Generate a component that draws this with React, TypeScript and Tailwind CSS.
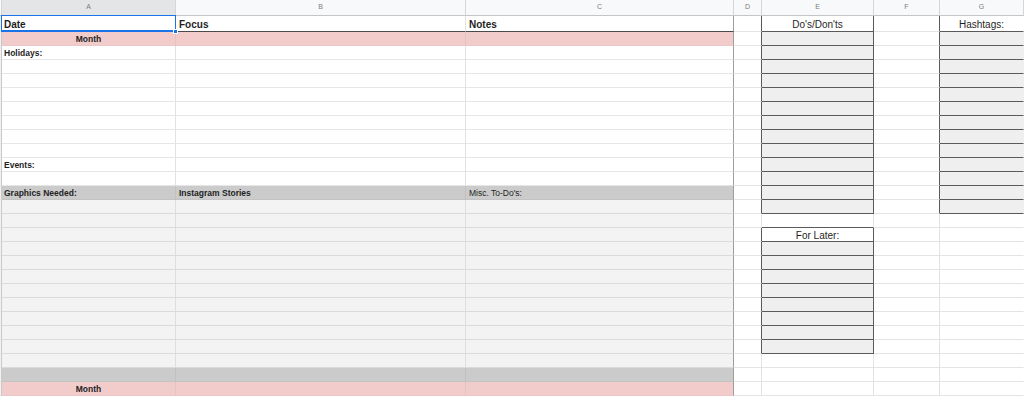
import React from 'react';

// column widths of the sheet (row-header strip, A..G)
const W = {
  rh: 'w-[2px]',
  a: 'w-[174px]',
  b: 'w-[290px]',
  c: 'w-[268px]',
  d: 'w-[28px]',
  e: 'w-[112px]',
  f: 'w-[66px]',
  g: 'flex-1 min-w-0',
};

const DARK_R = 'border-r-[#5a5a5a]';
const DARK_B = 'border-b-[#5a5a5a]';
const LINE_R = 'border-r-[#e2e2e2]';
const LINE_B = 'border-b-[#e4e4e4]';
const EDGE_C = 'border-r-[#9d9d9d]';

type Band = 'pink' | 'white' | 'dark' | 'light';

const BAND: Record<Band, { bg: string; r: string; b: string }> = {
  pink: { bg: 'bg-[#f2cbcb]', r: 'border-r-[#e2c4c4]', b: 'border-b-[#ebc7c7]' },
  white: { bg: 'bg-white', r: 'border-r-[#e2e2e2]', b: 'border-b-[#e6e6e6]' },
  dark: { bg: 'bg-[#cbcbcb]', r: 'border-r-[#c0c0c0]', b: 'border-b-[#c3c3c3]' },
  light: { bg: 'bg-[#f3f3f3]', r: 'border-r-[#dedede]', b: 'border-b-[#dbdbdb]' },
};

const bandOf = (r: number): Band => {
  if (r === 0 || r === 25) return 'pink';
  if (r === 11 || r === 24) return 'dark';
  if (r >= 12 && r <= 23) return 'light';
  return 'white';
};

type CellProps = {
  w: string;
  bg?: string;
  r?: string;
  b?: string;
  pad?: string;
  center?: boolean;
  extra?: string;
  children?: React.ReactNode;
};

const Cell: React.FC<CellProps> = ({
  w,
  bg = 'bg-white',
  r = LINE_R,
  b = LINE_B,
  pad = 'px-[3px]',
  center,
  extra = 'overflow-hidden',
  children,
}) => (
  <div
    className={`${w} ${bg} ${r} ${b} ${pad} ${center ? 'justify-center' : 'justify-start'} ${extra} relative h-full shrink-0 flex items-center pt-[2px] whitespace-nowrap border-r border-b text-[#1f1f1f]`}
  >
    {children}
  </div>
);

const Label: React.FC<{ bold?: boolean; children: React.ReactNode }> = ({ bold = true, children }) => (
  <span className={`text-[8.5px] leading-none ${bold ? 'font-bold' : 'font-normal'}`}>{children}</span>
);

const ColHead: React.FC<{ w: string; active?: boolean; children?: React.ReactNode }> = ({ w, active, children }) => (
  <div
    className={`${w} ${active ? 'bg-[#e4e5e6]' : 'bg-[#f8f9fa]'} h-full shrink-0 flex items-center justify-center border-r border-b border-r-[#d6d6d6] border-b-[#c5c5c5] text-[7px] text-[#7b7b7b]`}
  >
    {children}
  </div>
);

function BodyRow({ r }: { r: number }) {
  const band = BAND[bandOf(r)];

  let aText: React.ReactNode = null;
  let aCenter = false;
  if (r === 0 || r === 25) {
    aText = <Label>Month</Label>;
    aCenter = true;
  } else if (r === 1) aText = <Label>Holidays:</Label>;
  else if (r === 9) aText = <Label>Events:</Label>;
  else if (r === 11) aText = <Label>Graphics Needed:</Label>;

  const bText = r === 11 ? <Label>Instagram Stories</Label> : null;
  const cText = r === 11 ? <Label bold={false}>Misc. To-Do's:</Label> : null;

  // Do's/Don'ts list and For Later list live in column E, hashtags in G
  const boxE = r <= 12 || (r >= 15 && r <= 22);
  const headE = r === 14;
  const boxG = r <= 12;

  let eBg = 'bg-white';
  let eR = LINE_R;
  let eB = LINE_B;
  if (boxE) {
    eBg = 'bg-[#efefef]';
    eR = DARK_R;
    eB = DARK_B;
  } else if (headE) {
    eR = DARK_R;
    eB = DARK_B;
  } else if (r === 13) {
    eB = DARK_B;
  }

  return (
    <div className="flex h-[14px]">
      <Cell w={W.rh} bg="bg-[#f1f1f1]" r="border-r-[#c9c9c9]" b="border-b-[#e4e4e4]" pad="px-0" />
      <Cell w={W.a} bg={band.bg} r={band.r} b={band.b} pad="px-[2px]" center={aCenter}>
        {aText}
      </Cell>
      <Cell w={W.b} bg={band.bg} r={band.r} b={band.b}>
        {bText}
      </Cell>
      <Cell w={W.c} bg={band.bg} r={EDGE_C} b={band.b}>
        {cText}
      </Cell>
      <Cell w={W.d} r={boxE || headE ? DARK_R : LINE_R} />
      <Cell w={W.e} bg={eBg} r={eR} b={eB} center>
        {headE && <span className="text-[10px] leading-none">For Later:</span>}
      </Cell>
      <Cell w={W.f} r={boxG ? DARK_R : LINE_R} />
      <Cell w={W.g} bg={boxG ? 'bg-[#efefef]' : 'bg-white'} r="border-r-transparent" b={boxG ? DARK_B : LINE_B} />
    </div>
  );
}

const App: React.FC = () => {
  const rows = Array.from({ length: 26 }, (_, i) => i);

  return (
    <div className="w-[1024px] h-[396px] overflow-hidden bg-white flex flex-col font-['Liberation_Sans',Arial,sans-serif]">
      {/* column letters */}
      <div className="flex h-[16px]">
        <ColHead w={W.rh} />
        <ColHead w={W.a} active>A</ColHead>
        <ColHead w={W.b}>B</ColHead>
        <ColHead w={W.c}>C</ColHead>
        <ColHead w={W.d}>D</ColHead>
        <ColHead w={W.e}>E</ColHead>
        <ColHead w={W.f}>F</ColHead>
        <ColHead w={W.g}>G</ColHead>
      </div>

      {/* title row */}
      <div className="flex h-[16px]">
        <Cell w={W.rh} bg="bg-[#f1f1f1]" r="border-r-[#c9c9c9]" pad="px-0" />
        <Cell w={W.a} b="border-b-[#4a4a4a]" pad="px-[2px]" extra="overflow-visible z-10">
          <span className="text-[10px] font-bold leading-none">Date</span>
          <div className="pointer-events-none absolute -left-px -top-px -right-px -bottom-px border border-b-2 border-[#1a73e8]" />
          <div className="absolute -right-[3px] -bottom-[3px] w-[5px] h-[5px] bg-[#1a73e8] border border-white" />
        </Cell>
        <Cell w={W.b} b="border-b-[#4a4a4a]">
          <span className="text-[10px] font-bold leading-none">Focus</span>
        </Cell>
        <Cell w={W.c} r={EDGE_C} b="border-b-[#4a4a4a]">
          <span className="text-[10px] font-bold leading-none">Notes</span>
        </Cell>
        <Cell w={W.d} r={DARK_R} />
        <Cell w={W.e} r={DARK_R} b={DARK_B} center>
          <span className="text-[10px] leading-none">Do's/Don'ts</span>
        </Cell>
        <Cell w={W.f} r={DARK_R} />
        <Cell w={W.g} r="border-r-transparent" b={DARK_B} center>
          <span className="text-[10px] leading-none">Hashtags:</span>
        </Cell>
      </div>

      {rows.map(r => (
        <BodyRow key={r} r={r} />
      ))}
    </div>
  );
};

export default App;
